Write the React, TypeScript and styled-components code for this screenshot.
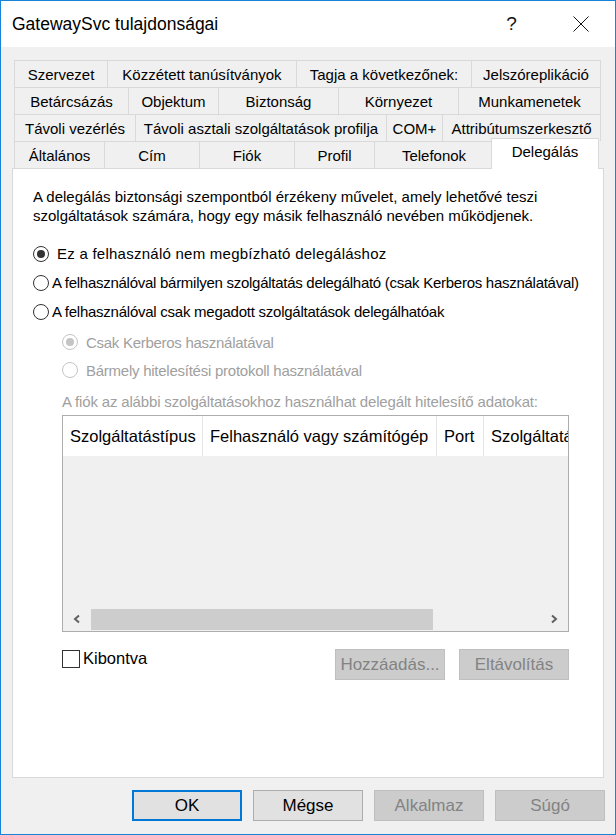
import React from "react";
import styled, { createGlobalStyle } from "styled-components";

const Global = createGlobalStyle`
  html, body { margin: 0; padding: 0; background: #ffffff; }
  body { font-family: "Liberation Sans", Arial, sans-serif; }
  * { box-sizing: border-box; }
`;

const Window = styled.div`
  width: 616px;
  height: 835px;
  border: 1px solid #1883d7;
  background: #f0f0f0;
  display: flex;
  flex-direction: column;
  font-family: "Liberation Sans", Arial, sans-serif;
  font-size: 15px;
  color: #000;
`;

const TitleBar = styled.div`
  height: 46px;
  background: #ffffff;
  display: flex;
  align-items: center;
  flex-shrink: 0;
`;

const TitleText = styled.div`
  flex: 1;
  padding-left: 11px;
  font-size: 17.5px;
  color: #000;
  white-space: nowrap;
`;

const CaptionButton = styled.div`
  width: 69px;
  height: 46px;
  display: flex;
  align-items: center;
  justify-content: center;
  font-size: 19px;
  color: #111;
`;

const Body = styled.div`
  padding: 13px 11px 0 11px;
  display: flex;
  flex-direction: column;
`;

const TabStrip = styled.div`
  display: flex;
  flex-direction: column;
  padding: 0 2px;
`;

const TabRow = styled.div`
  display: flex;
  align-items: flex-end;
  height: 27px;
`;

const Tab = styled.div<{ $width: number; $selected?: boolean; $last?: boolean }>`
  width: ${(p) => p.$width}px;
  flex-shrink: 0;
  height: ${(p) => (p.$selected ? 31 : 27)}px;
  border-top: 1px solid #d9d9d9;
  border-left: 1px solid #d9d9d9;
  border-right: ${(p) => (p.$last || p.$selected ? "1px solid #d9d9d9" : "none")};
  background: ${(p) => (p.$selected ? "#ffffff" : "#f0f0f0")};
  margin: ${(p) => (p.$selected ? "0 -2px -1px -2px" : "0")};
  position: relative;
  z-index: ${(p) => (p.$selected ? 1 : 0)};
  display: flex;
  align-items: ${(p) => (p.$selected ? "flex-start" : "center")};
  padding-top: ${(p) => (p.$selected ? "4px" : "1px")};
  justify-content: center;
  white-space: nowrap;
  font-size: 15px;
`;

const Panel = styled.div`
  height: 610px;
  background: #ffffff;
  border: 1px solid #d9d9d9;
  padding: 18px 20px 0 20px;
  display: flex;
  flex-direction: column;
`;

const Description = styled.p`
  margin: 0;
  max-width: 520px;
  line-height: 19px;
  font-size: 15px;
`;

const OptionGroup = styled.div`
  margin-top: 14px;
  display: flex;
  flex-direction: column;
`;

const RadioRow = styled.div<{
  $height: number;
  $gap: number;
  $disabled?: boolean;
  $spacing?: number;
}>`
  height: ${(p) => p.$height}px;
  display: flex;
  align-items: center;
  gap: ${(p) => p.$gap}px;
  color: ${(p) => (p.$disabled ? "#a0a0a0" : "#000")};
  letter-spacing: ${(p) => p.$spacing ?? 0}px;
  white-space: nowrap;
`;

const RadioCircle = styled.span<{ $checked?: boolean; $disabled?: boolean }>`
  width: 16px;
  height: 16px;
  border-radius: 50%;
  border: 1px solid ${(p) => (p.$disabled ? "#c4c4c4" : "#333333")};
  background: #ffffff;
  display: flex;
  align-items: center;
  justify-content: center;
  flex-shrink: 0;
  &::after {
    content: "";
    width: 8px;
    height: 8px;
    border-radius: 50%;
    background: ${(p) => (p.$disabled ? "#c4c4c4" : "#333333")};
    display: ${(p) => (p.$checked ? "block" : "none")};
  }
`;

const Indented = styled.div`
  margin-left: 29px;
  width: 507px;
  display: flex;
  flex-direction: column;
`;

const SubOptions = styled.div`
  margin-top: 2px;
  display: flex;
  flex-direction: column;
`;

const Caption = styled.div`
  margin-top: 8px;
  line-height: 19px;
  color: #a0a0a0;
  letter-spacing: -0.16px;
  white-space: nowrap;
`;

const ListView = styled.div`
  margin-top: 4px;
  border: 1px solid #adadad;
  display: flex;
  flex-direction: column;
  overflow: hidden;
`;

const ListHeader = styled.div`
  height: 40px;
  background: #ffffff;
  display: flex;
  overflow: hidden;
`;

const HeaderCell = styled.div<{ $width: number }>`
  width: ${(p) => p.$width}px;
  flex-shrink: 0;
  border-right: 1px solid #e5e5e5;
  padding-left: 7px;
  display: flex;
  align-items: center;
  white-space: nowrap;
  overflow: hidden;
  font-size: 16.5px;
`;

const ListBody = styled.div`
  height: 151px;
  background: #f0f0f0;
`;

const ScrollBar = styled.div`
  height: 24px;
  background: #f0f0f0;
  display: flex;
  align-items: center;
`;

const ScrollArrow = styled.div`
  width: 28px;
  height: 24px;
  display: flex;
  align-items: center;
  justify-content: center;
  flex-shrink: 0;
`;

const ScrollThumb = styled.div`
  width: 342px;
  height: 21px;
  background: #cdcdcd;
`;

const ScrollTrack = styled.div`
  flex: 1;
`;

const ActionsRow = styled.div`
  margin-top: 17px;
  display: flex;
  align-items: flex-start;
`;

const CheckLabel = styled.label`
  display: flex;
  align-items: center;
  gap: 3px;
  flex: 1;
  height: 19px;
  font-size: 16.5px;
`;

const CheckBox = styled.span`
  width: 18px;
  height: 18px;
  border: 1px solid #333333;
  background: #ffffff;
  flex-shrink: 0;
`;

const ButtonGroup = styled.div<{ $gap: number }>`
  display: flex;
  gap: ${(p) => p.$gap}px;
`;

const Button = styled.div<{ $variant: "default" | "normal" | "disabled" }>`
  width: 110px;
  height: 31px;
  display: flex;
  align-items: center;
  justify-content: center;
  font-size: 17px;
  background: ${(p) => (p.$variant === "disabled" ? "#cccccc" : "#e1e1e1")};
  border: ${(p) =>
    p.$variant === "default"
      ? "2px solid #0078d7"
      : p.$variant === "disabled"
      ? "1px solid #bfbfbf"
      : "1px solid #adadad"};
  color: ${(p) => (p.$variant === "disabled" ? "#838383" : "#000")};
`;

const Footer = styled.div`
  margin-top: 12px;
  padding-right: 10px;
  display: flex;
  justify-content: flex-end;
  gap: 11px;
`;

const rows: { label: string; width: number; selected?: boolean }[][] = [
  [
    { label: "Szervezet", width: 93 },
    { label: "Közzétett tanúsítványok", width: 189 },
    { label: "Tagja a következőnek:", width: 175 },
    { label: "Jelszóreplikáció", width: 130 },
  ],
  [
    { label: "Betárcsázás", width: 114 },
    { label: "Objektum", width: 90 },
    { label: "Biztonság", width: 120 },
    { label: "Környezet", width: 120 },
    { label: "Munkamenetek", width: 143 },
  ],
  [
    { label: "Távoli vezérlés", width: 121 },
    { label: "Távoli asztali szolgáltatások profilja", width: 251 },
    { label: "COM+", width: 56 },
    { label: "Attribútumszerkesztő", width: 159 },
  ],
  [
    { label: "Általános", width: 90 },
    { label: "Cím", width: 95 },
    { label: "Fiók", width: 95 },
    { label: "Profil", width: 80 },
    { label: "Telefonok", width: 119 },
    { label: "Delegálás", width: 108, selected: true },
  ],
];

const Chevron = ({ dir }: { dir: "left" | "right" }) => (
  <svg width="8" height="10" viewBox="0 0 8 10">
    <polyline
      points={dir === "left" ? "6,1.5 2,5 6,8.5" : "2,1.5 6,5 2,8.5"}
      fill="none"
      stroke="#606060"
      strokeWidth="2"
    />
  </svg>
);

export default function App() {
  return (
    <>
      <Global />
      <Window>
        <TitleBar>
          <TitleText>GatewaySvc tulajdonságai</TitleText>
          <CaptionButton>?</CaptionButton>
          <CaptionButton>
            <svg width="16" height="16" viewBox="0 0 16 16">
              <line x1="0.5" y1="0.5" x2="15.5" y2="15.5" stroke="#111" strokeWidth="1" />
              <line x1="15.5" y1="0.5" x2="0.5" y2="15.5" stroke="#111" strokeWidth="1" />
            </svg>
          </CaptionButton>
        </TitleBar>
        <Body>
          <TabStrip>
            {rows.map((row, i) => (
              <TabRow key={i}>
                {row.map((t, j) => (
                  <Tab
                    key={t.label}
                    $width={t.width}
                    $selected={t.selected}
                    $last={j === row.length - 1}
                  >
                    {t.label}
                  </Tab>
                ))}
              </TabRow>
            ))}
          </TabStrip>
          <Panel>
            <Description>
              A delegálás biztonsági szempontból érzékeny művelet, amely lehetővé teszi
              szolgáltatások számára, hogy egy másik felhasználó nevében működjenek.
            </Description>
            <OptionGroup>
              <RadioRow $height={29} $gap={8} $spacing={0.25}>
                <RadioCircle $checked />
                Ez a felhasználó nem megbízható delegáláshoz
              </RadioRow>
              <RadioRow $height={29} $gap={3} $spacing={-0.27}>
                <RadioCircle />
                A felhasználóval bármilyen szolgáltatás delegálható (csak Kerberos használatával)
              </RadioRow>
              <RadioRow $height={29} $gap={3} $spacing={-0.25}>
                <RadioCircle />
                A felhasználóval csak megadott szolgáltatások delegálhatóak
              </RadioRow>
            </OptionGroup>
            <Indented>
              <SubOptions>
                <RadioRow $height={28} $gap={8} $disabled $spacing={-0.28}>
                  <RadioCircle $checked $disabled />
                  Csak Kerberos használatával
                </RadioRow>
                <RadioRow $height={28} $gap={8} $disabled $spacing={-0.25}>
                  <RadioCircle $disabled />
                  Bármely hitelesítési protokoll használatával
                </RadioRow>
              </SubOptions>
              <Caption>
                A fiók az alábbi szolgáltatásokhoz használhat delegált hitelesítő adatokat:
              </Caption>
              <ListView>
                <ListHeader>
                  <HeaderCell $width={140}>Szolgáltatástípus</HeaderCell>
                  <HeaderCell $width={234}>Felhasználó vagy számítógép</HeaderCell>
                  <HeaderCell $width={47}>Port</HeaderCell>
                  <HeaderCell $width={150}>Szolgáltatásnév</HeaderCell>
                </ListHeader>
                <ListBody />
                <ScrollBar>
                  <ScrollArrow>
                    <Chevron dir="left" />
                  </ScrollArrow>
                  <ScrollThumb />
                  <ScrollTrack />
                  <ScrollArrow>
                    <Chevron dir="right" />
                  </ScrollArrow>
                </ScrollBar>
              </ListView>
              <ActionsRow>
                <CheckLabel>
                  <CheckBox />
                  Kibontva
                </CheckLabel>
                <ButtonGroup $gap={14}>
                  <Button $variant="disabled">Hozzáadás...</Button>
                  <Button $variant="disabled">Eltávolítás</Button>
                </ButtonGroup>
              </ActionsRow>
            </Indented>
          </Panel>
        </Body>
        <Footer>
          <Button $variant="default">OK</Button>
          <Button $variant="normal">Mégse</Button>
          <Button $variant="disabled">Alkalmaz</Button>
          <Button $variant="disabled">Súgó</Button>
        </Footer>
      </Window>
    </>
  );
}
